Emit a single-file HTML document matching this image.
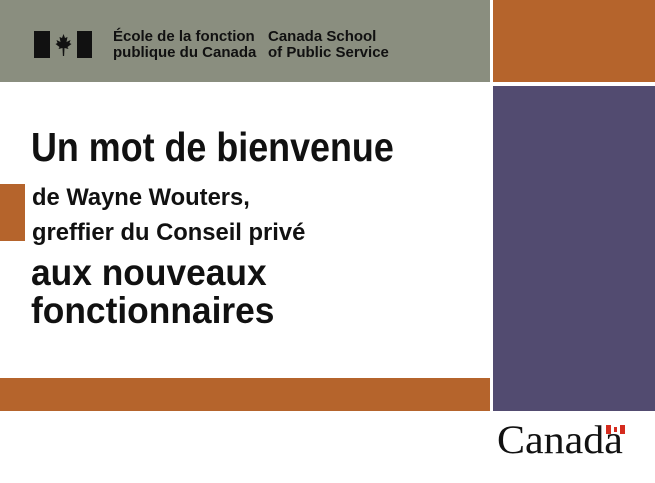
<!DOCTYPE html>
<html><head><meta charset="utf-8"><style>
body{margin:0;width:655px;height:483px;background:#fff;position:relative;overflow:hidden;font-family:"Liberation Sans",Arial,sans-serif}
.a{position:absolute}
.t{position:absolute;white-space:nowrap;color:#111;transform-origin:0 0;font-weight:bold}
</style></head><body>
<div class="a" style="left:0;top:0;width:490px;height:82px;background:#8a8e7f"></div>
<div class="a" style="left:493px;top:0;width:162px;height:82px;background:#b5642c"></div>
<div class="a" style="left:493px;top:86px;width:162px;height:325px;background:#524b70"></div>
<div class="a" style="left:0;top:378px;width:490px;height:33px;background:#b5642c"></div>
<div class="a" style="left:0;top:184px;width:25px;height:57px;background:#b5642c"></div>
<!-- FIP -->
<div class="a" style="left:34px;top:31px;width:16px;height:27px;background:#111"></div>
<div class="a" style="left:77px;top:31px;width:15px;height:27px;background:#111"></div>
<svg class="a" style="left:52px;top:33px" width="23" height="24" viewBox="0 0 20 24"><path d="M10 1 L11.5 5 L14 4 L13 9 L17 7 L16 10 L18 11 L14 14 L15 16 L11 15 L10.6 23 L9.4 23 L9 15 L5 16 L6 14 L2 11 L4 10 L3 7 L7 9 L6 4 L8.5 5 Z" fill="#111"/></svg>
<div class="t" style="left:113px;top:29px;font-size:15px;line-height:16px;">École de la fonction<br>publique du Canada</div>
<div class="t" style="left:268px;top:29px;font-size:15px;line-height:16px;">Canada School<br>of Public Service</div>
<div class="t" style="left:31px;top:124px;font-size:41px;line-height:46px;transform:scaleX(.875)">Un mot de bienvenue</div>
<div class="t" style="left:32px;top:180px;font-size:24px;line-height:35px;transform:scaleX(.99)">de Wayne Wouters,<br>greffier du Conseil privé</div>
<div class="t" style="left:31px;top:254px;font-size:37px;line-height:38px;transform:scaleX(.955)">aux nouveaux<br>fonctionnaires</div>
<div class="t" style="left:497px;top:420px;font-family:'Liberation Serif',serif;font-weight:normal;font-size:40px;line-height:40px;transform:scaleX(1.05)">Canada</div>
<div class="a" style="left:606px;top:425px;width:19px;height:9px;background:#fff"></div>
<div class="a" style="left:606px;top:425px;width:5px;height:9px;background:#d52b1e"></div>
<div class="a" style="left:620px;top:425px;width:5px;height:9px;background:#d52b1e"></div>
<div class="a" style="left:614px;top:427px;width:3px;height:5px;background:#d52b1e"></div>
</body></html>
